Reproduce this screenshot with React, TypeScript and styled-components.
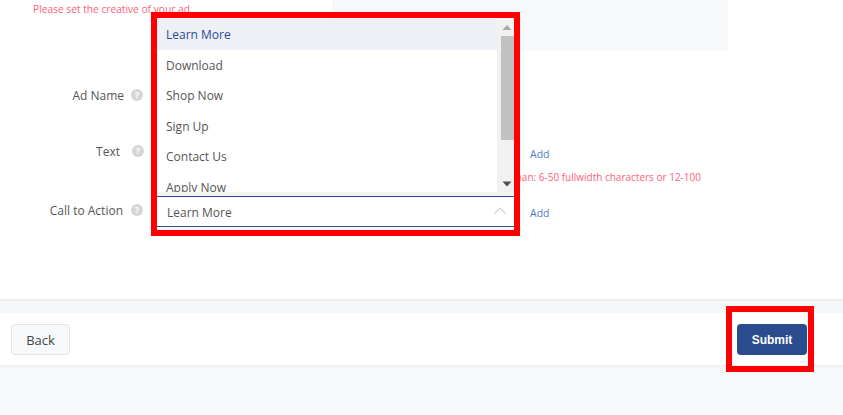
import React from "react";
import styled, { createGlobalStyle } from "styled-components";

const Global = createGlobalStyle`
  html, body { margin: 0; padding: 0; background: #f7f8fa; }
  * { box-sizing: border-box; }
`;

const Page = styled.div`
  position: relative;
  width: 843px;
  height: 415px;
  overflow: hidden;
  background: #f7f8fa;
  font-family: "Open Sans", "Liberation Sans", sans-serif;
  font-size: 12px;
  color: #555;
  display: flex;
  flex-direction: column;
`;

const Form = styled.section`
  height: 299px;
  background: #fff;
  flex: none;
`;

const CreativeRow = styled.div`
  height: 51px;
  display: flex;
  margin-bottom: 29px;
`;

const ErrorText = styled.div<{ $size: number }>`
  color: #ff6078;
  font-size: ${(p) => p.$size}px;
  line-height: 14px;
  white-space: nowrap;
`;

const CreativeError = styled(ErrorText)`
  width: 332px;
  padding: 2px 0 0 33px;
`;

const CreativePanel = styled.div`
  width: 396px;
  background: #f7f8fa;
`;

const Field = styled.div<{ $height: number }>`
  display: grid;
  grid-template-columns: 157px 1fr;
  height: ${(p) => p.$height}px;
`;

const LabelCell = styled.div<{ $right: number; $gap: number; $height: number }>`
  display: flex;
  justify-content: flex-end;
  align-items: center;
  gap: ${(p) => p.$gap}px;
  height: ${(p) => p.$height}px;
  padding-right: ${(p) => p.$right}px;
  color: #555;
`;

const Help = styled.span`
  width: 12px;
  height: 12px;
  border-radius: 50%;
  background: #d6d6d6;
  color: #fff;
  font-size: 9px;
  font-weight: 700;
  line-height: 12px;
  text-align: center;
`;

const ControlLine = styled.div`
  display: flex;
  align-items: center;
  gap: 16px;
`;

const Input = styled.div<{ $height: number }>`
  width: 357px;
  height: ${(p) => p.$height}px;
  border: 1px solid #dfe3ea;
  border-radius: 3px;
`;

const AddLink = styled.a<{ $shift: number }>`
  color: #4f7cc4;
  font-size: 10.5px;
  line-height: 14px;
  margin-top: ${(p) => p.$shift}px;
`;

const TextError = styled(ErrorText)`
  width: 544px;
  text-align: right;
  margin-top: 4px;
`;

const SelectWrap = styled.div`
  position: relative;
  width: 357px;
`;

const SelectBox = styled.div`
  height: 31px;
  display: flex;
  align-items: center;
  justify-content: space-between;
  padding: 2px 8px 0 10px;
  background: #fff;
  border-top: 1px solid #2d4a94;
  border-bottom: 1px solid #2d4a94;
  color: #555;
`;

const Chevron = styled.svg`
  width: 12px;
  height: 7px;
  margin-top: -4px;
`;

const Menu = styled.div`
  position: absolute;
  left: 0;
  bottom: calc(100% + 4px);
  width: 357px;
  height: 173px;
  display: flex;
  background: #fff;
  box-shadow: 0 4px 0 #f3f3f3;
  z-index: 2;
`;

const OptionList = styled.ul`
  flex: 1;
  margin: 0;
  padding: 0;
  list-style: none;
  overflow: hidden;
`;

const MenuItem = styled.li<{ $active?: boolean }>`
  height: 30.6px;
  line-height: 30.6px;
  padding: 1px 0 0 9px;
  white-space: nowrap;
  color: ${(p) => (p.$active ? "#2d4a94" : "#555")};
  background: ${(p) => (p.$active ? "#eef0f5" : "#fff")};
`;

const ScrollTrack = styled.div`
  width: 17px;
  flex: none;
  display: flex;
  flex-direction: column;
  background: #f1f1f1;
`;

const ScrollArrow = styled.svg`
  width: 17px;
  height: 17px;
  flex: none;
`;

const ScrollThumb = styled.div`
  height: 104px;
  margin-left: 4px;
  background: #c1c1c1;
`;

const ScrollSpace = styled.div`
  flex: 1;
`;

const Band = styled.div`
  height: 14px;
  flex: none;
  background: #f6f7f9;
  border-top: 2px solid #eceef2;
`;

const Footer = styled.footer`
  height: 52px;
  flex: none;
  background: #fff;
  box-shadow: 0 2px 2px #eef0f4;
  padding: 11px 36px 0 11px;
  display: flex;
  justify-content: space-between;
  align-items: flex-start;
`;

const BackButton = styled.button`
  width: 59px;
  height: 31px;
  border: 1px solid #e2e4e8;
  border-radius: 4px;
  background: #f7f8fa;
  color: #444;
  font-family: "Open Sans", "Liberation Sans", sans-serif;
  font-size: 13px;
  padding: 0;
`;

const SubmitButton = styled.button`
  width: 70px;
  height: 31px;
  border: 0;
  border-radius: 4px;
  background: #2a4b8d;
  color: #fff;
  font-family: "Liberation Sans", sans-serif;
  font-size: 12px;
  font-weight: 700;
  padding: 0;
`;

const Annotation = styled.div<{ $l: number; $t: number; $w: number; $h: number }>`
  position: absolute;
  left: ${(p) => p.$l}px;
  top: ${(p) => p.$t}px;
  width: ${(p) => p.$w}px;
  height: ${(p) => p.$h}px;
  border: 6.5px solid #ff0000;
  pointer-events: none;
  z-index: 5;
`;

const options = ["Learn More", "Download", "Shop Now", "Sign Up", "Contact Us", "Apply Now"];

export default function App() {
  return (
    <Page>
      <Global />
      <Form>
        <CreativeRow>
          <CreativeError $size={10.2}>Please set the creative of your ad</CreativeError>
          <CreativePanel />
        </CreativeRow>

        <Field $height={56}>
          <LabelCell $right={14} $gap={7} $height={30}>
            Ad Name <Help>?</Help>
          </LabelCell>
          <Input $height={30} />
        </Field>

        <Field $height={60}>
          <LabelCell $right={13} $gap={12} $height={30}>
            Text <Help>?</Help>
          </LabelCell>
          <div>
            <ControlLine>
              <Input $height={30} />
              <AddLink $shift={6}>Add</AddLink>
            </ControlLine>
            <TextError $size={10}>The length of the text must be no more and no less than: 6-50 fullwidth characters or 12-100</TextError>
          </div>
        </Field>

        <Field $height={31}>
          <LabelCell $right={14} $gap={8} $height={28}>
            Call to Action <Help>?</Help>
          </LabelCell>
          <ControlLine>
            <SelectWrap>
              <Menu>
                <OptionList>
                  {options.map((o, i) => (
                    <MenuItem key={o} $active={i === 0}>{o}</MenuItem>
                  ))}
                </OptionList>
                <ScrollTrack>
                  <ScrollArrow viewBox="0 0 17 17">
                    <path d="M10 6l4.500 5h-9z" fill="#a8a8a8" />
                  </ScrollArrow>
                  <ScrollThumb />
                  <ScrollSpace />
                  <ScrollArrow viewBox="0 0 17 17">
                    <path d="M5.500 6.500h9l-4.500 5z" fill="#505050" />
                  </ScrollArrow>
                </ScrollTrack>
              </Menu>
              <SelectBox>
                Learn More
                <Chevron viewBox="0 0 12 7">
                  <path d="M.5 6.500L6 1l5.500 5.500" fill="none" stroke="#d2d2d2" strokeWidth="1.2" />
                </Chevron>
              </SelectBox>
            </SelectWrap>
            <AddLink $shift={2}>Add</AddLink>
          </ControlLine>
        </Field>
      </Form>

      <Band />
      <Footer>
        <BackButton>Back</BackButton>
        <SubmitButton>Submit</SubmitButton>
      </Footer>

      <Annotation $l={151} $t={12} $w={369} $h={224} />
      <Annotation $l={726} $t={306} $w={88} $h={66} />
    </Page>
  );
}
